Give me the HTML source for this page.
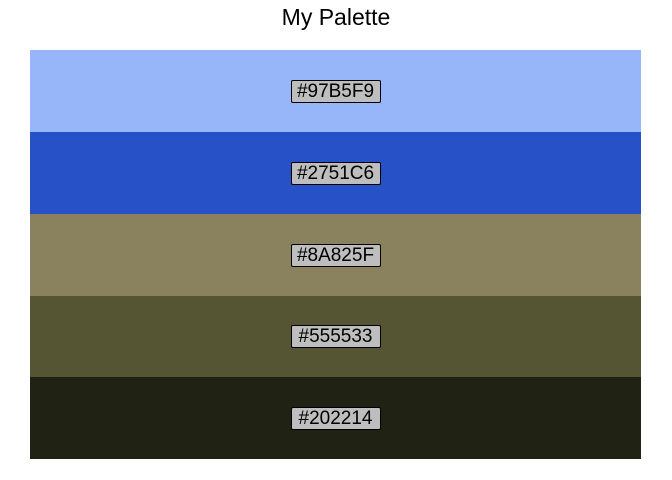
<!DOCTYPE html>
<html><head><style>
body{margin:0;width:672px;height:480px;background:#fff;position:relative;font-family:"Liberation Sans",sans-serif;overflow:hidden}
.t{position:absolute;left:0;width:672px;top:4px;text-align:center;font-size:23px;color:#000}
.b{position:absolute;left:30px;width:611px;display:flex;align-items:center;justify-content:center}
.l{display:inline-block;width:88px;text-align:center;background:#bebebe;border:1px solid #000;border-radius:2px;font-size:19px;line-height:21px;color:#000}
</style></head><body>
<div class="t">My Palette</div>
<div class="b" style="top:50px;height:82px;background:#97B5F9"><span class="l">#97B5F9</span></div>
<div class="b" style="top:132px;height:82px;background:#2751C6"><span class="l">#2751C6</span></div>
<div class="b" style="top:214px;height:82px;background:#8A825F"><span class="l">#8A825F</span></div>
<div class="b" style="top:296px;height:81px;background:#555533"><span class="l">#555533</span></div>
<div class="b" style="top:377px;height:82px;background:#202214"><span class="l">#202214</span></div>
</body></html>
